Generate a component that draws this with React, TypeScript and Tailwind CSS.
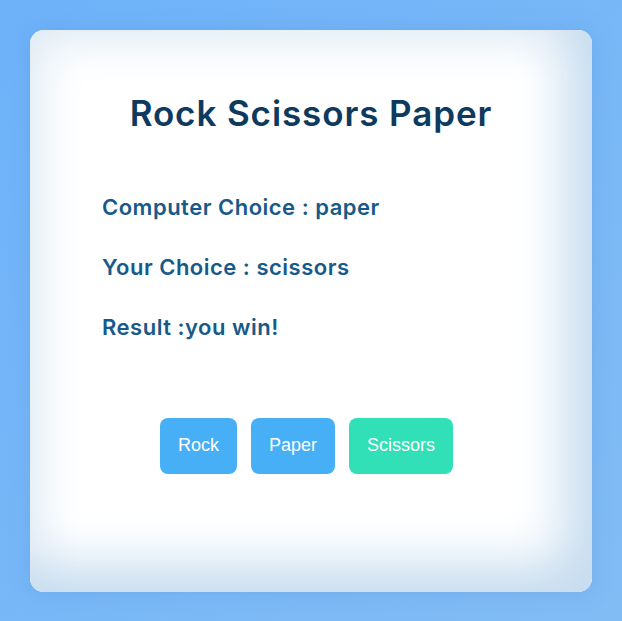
import React, { useState } from 'react'

const choices = ['rock', 'paper', 'scissors']

const App: React.FC = () => {
  const [computer] = useState('paper')
  const [user] = useState('scissors')
  const [result] = useState('you win!')

  return (
    <div className="flex min-h-screen items-center justify-center bg-gradient-to-br from-[#6db2fa] to-[#82bcf4]">
      <div className="flex h-[562px] w-[562px] flex-col rounded-[14px] bg-white px-[72px] pt-[57px] shadow-[inset_-28px_-28px_50px_#c6dcef,inset_18px_18px_40px_#e8f0f7,0_0_20px_rgba(90,150,220,0.35)] font-['Inter',sans-serif]">
        <h1 className="text-center text-[35px] font-semibold leading-[52px] tracking-[0.9px] text-[#0d3a5e]">
          Rock Scissors Paper
        </h1>

        {/* Choices */}
        <div className="mt-[54px] flex flex-col gap-[32px] text-[22px] font-semibold leading-[28px] tracking-[0.5px] text-[#175a89]">
          <p>Computer Choice : {computer}</p>
          <p>Your Choice : {user}</p>
          <p>Result :{result}</p>
        </div>

        <div className="mt-[77px] flex justify-center gap-[14px] pr-[9px] font-['Liberation_Sans',Arial,sans-serif] text-[18px] text-white">
          {choices.map((c) => (
            <button
              key={c}
              className={`h-[56px] rounded-[8px] px-[18px] ${c === 'scissors' ? 'bg-[#31e0b6]' : 'bg-[#47aff6]'}`}
            >
              {c.charAt(0).toUpperCase() + c.slice(1)}
            </button>
          ))}
        </div>
      </div>
    </div>
  )
}

export default App
